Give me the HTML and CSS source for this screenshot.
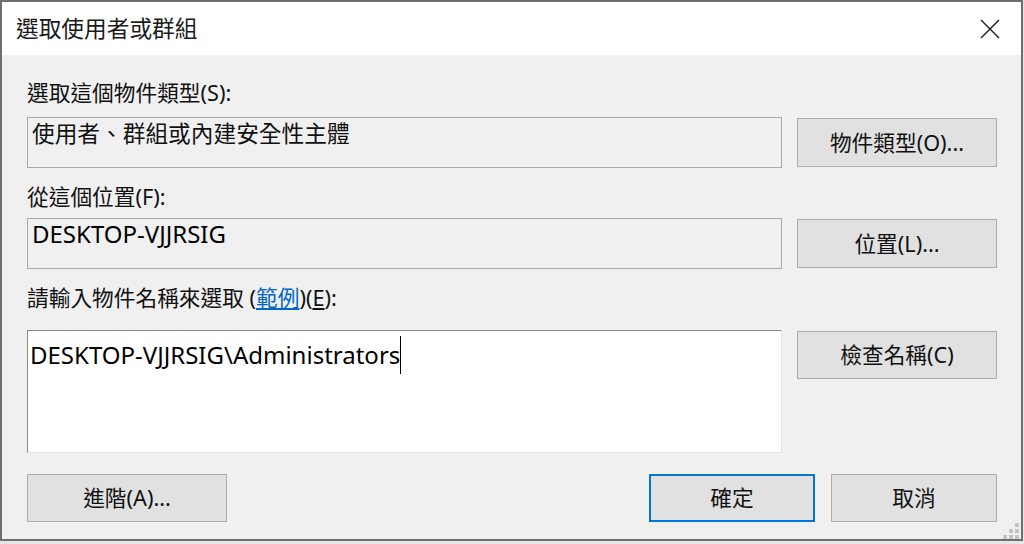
FILE: index.html
```html
<!DOCTYPE html>
<html lang="zh-Hant">
<head>
<meta charset="utf-8">
<title>選取使用者或群組</title>
<link rel="stylesheet" href="styles.css">
</head>
<body>
<div class="dialog">
  <div class="titlebar">
    <span class="title">選取使用者或群組</span>
    <svg class="close" width="20" height="20" viewBox="0 0 20 20"><path d="M1 1 L19 19 M19 1 L1 19" stroke="#1b1b1b" stroke-width="1.4" fill="none"/></svg>
  </div>
  <div class="content">
    <div class="label first">選取這個物件類型(S):</div>
    <div class="row">
      <div class="field ro cjk">使用者、群組或內建安全性主體</div>
      <div class="btn">物件類型(O)...</div>
    </div>
    <div class="label">從這個位置(F):</div>
    <div class="row">
      <div class="field ro latin">DESKTOP-VJJRSIG</div>
      <div class="btn">位置(L)...</div>
    </div>
    <div class="label third">請輸入物件名稱來選取 (<span class="link">範例</span>)(<u>E</u>):</div>
    <div class="row top">
      <div class="field edit latin">DESKTOP-VJJRSIG\Administrators<span class="caret"></span></div>
      <div class="btn short">檢查名稱(C)</div>
    </div>
    <div class="footer">
      <div class="btn foot wide">進階(A)...</div>
      <div class="spacer"></div>
      <div class="btn foot default">確定</div>
      <div class="btn foot">取消</div>
    </div>
    <svg class="grip" width="16" height="16" viewBox="0 0 16 16">
      <rect x="12" y="0" width="4" height="4" fill="#c3c3c3"/>
      <rect x="6" y="6" width="4" height="4" fill="#c3c3c3"/>
      <rect x="12" y="6" width="4" height="4" fill="#c3c3c3"/>
      <rect x="0" y="12" width="4" height="4" fill="#c3c3c3"/>
      <rect x="6" y="12" width="4" height="4" fill="#c3c3c3"/>
      <rect x="12" y="12" width="4" height="4" fill="#c3c3c3"/>
    </svg>
  </div>
</div>
</body>
</html>
```
FILE: styles.css
```css
html, body {
  margin: 0;
  padding: 0;
  background: #e6e6e6;
}
body {
  width: 1024px;
  height: 544px;
  overflow: hidden;
  font-family: "Noto Sans", "Noto Sans CJK TC", sans-serif;
  color: #111;
}
.dialog {
  box-sizing: border-box;
  width: 1023px;
  height: 541px;
  border: 2px solid #6e6e6e;
  background: #f0f0f0;
  display: flex;
  flex-direction: column;
}
.titlebar {
  height: 53px;
  flex: none;
  background: #fff;
  display: flex;
  align-items: center;
  justify-content: space-between;
  padding: 0 21px 0 14px;
}
.title {
  font-size: 22.7px;
  line-height: 28px;
  color: #1a1a1a;
}
.close {
  display: block;
}
.content {
  position: relative;
  flex: 1;
  padding: 0 24px 0 25px;
  display: flex;
  flex-direction: column;
}
.label {
  font-size: 21.7px;
  line-height: 28px;
  margin-top: 15px;
  margin-bottom: 7px;
}
.label.first {
  margin-top: 24px;
  margin-bottom: 10px;
}
.label.third {
  margin-top: 15px;
  margin-bottom: 18px;
}
.link {
  color: #0066cc;
  text-decoration: underline;
}
.row {
  display: flex;
  align-items: center;
  gap: 15px;
}
.row.top {
  align-items: flex-start;
}
.field {
  box-sizing: border-box;
  flex: 1;
  height: 51px;
  border: 1px solid #a9a9a9;
  padding: 1px 4px;
  line-height: 28px;
  white-space: nowrap;
}
.field.cjk {
  font-size: 22.7px;
  padding-top: 2px;
}
.field.latin {
  font-size: 24px;
  color: #000;
}
.field.edit {
  height: 123px;
  background: #fff;
  border-color: #8a8a8a #e3e3e3 #e3e3e3 #8a8a8a;
  padding: 5px 2px;
}
.caret {
  display: inline-block;
  width: 1px;
  height: 38px;
  background: #000;
  vertical-align: -10px;
}
.btn {
  box-sizing: border-box;
  width: 200px;
  height: 49px;
  flex: none;
  background: #e1e1e1;
  border: 1px solid #adadad;
  font-size: 21.7px;
  line-height: 28px;
  display: flex;
  align-items: center;
  justify-content: center;
  color: #111;
}
.btn.short {
  margin-top: 1px;
  height: 48px;
}
.footer {
  margin-top: 21px;
  display: flex;
  align-items: center;
  gap: 16px;
}
.spacer {
  flex: 1;
}
.btn.foot {
  width: 166px;
  height: 48px;
}
.btn.foot.wide {
  width: 200px;
}
.btn.default {
  border: 2px solid #0078d7;
}
.grip {
  position: absolute;
  right: 2px;
  bottom: 0px;
}
```
